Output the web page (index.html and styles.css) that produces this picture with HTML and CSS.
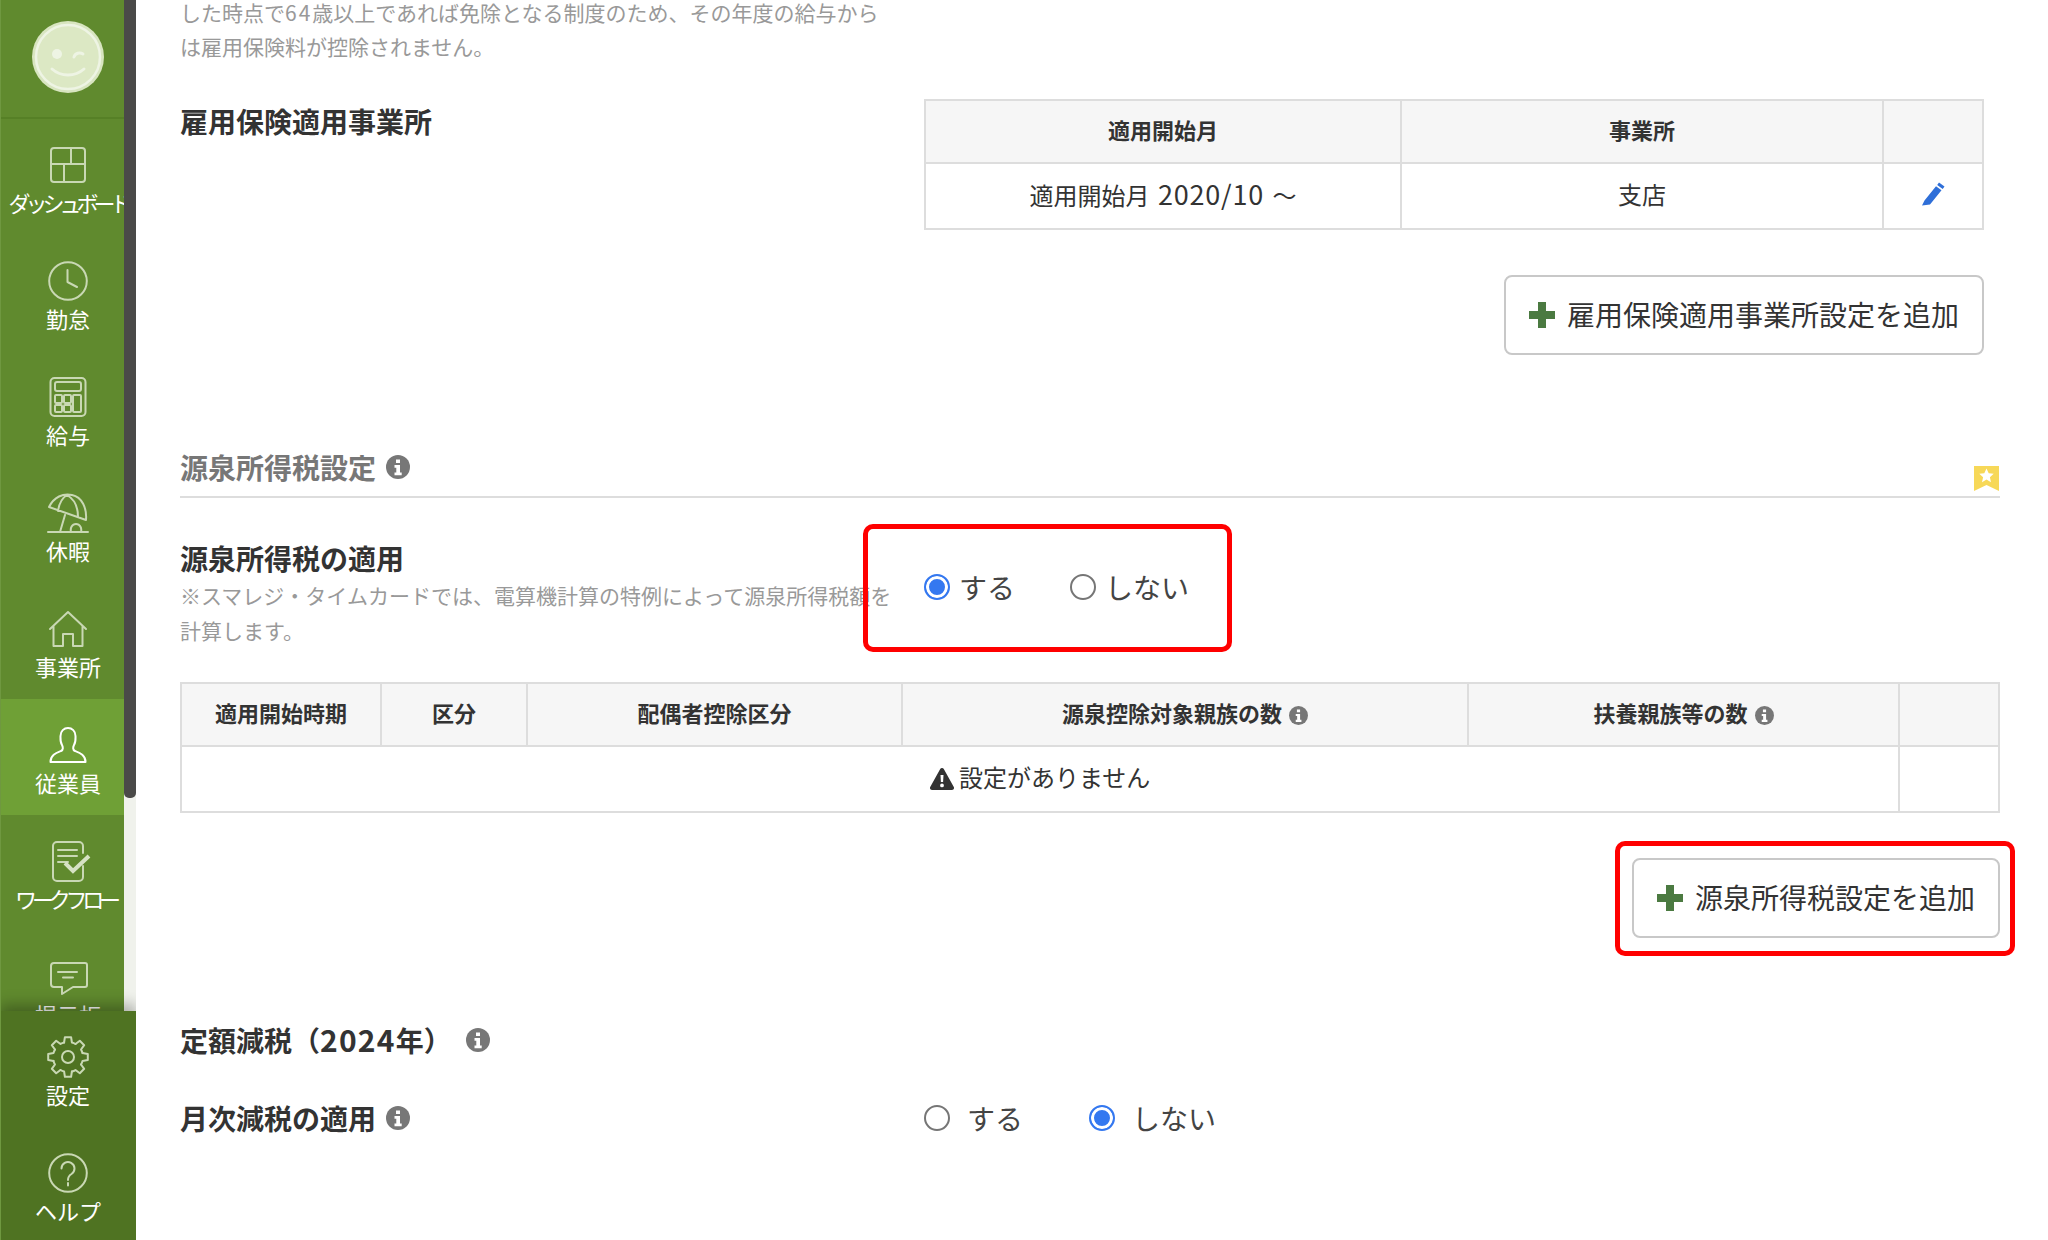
FILE: index.html
```html
<!DOCTYPE html>
<html lang="ja">
<head>
<meta charset="utf-8">
<title>従業員設定</title>
<link rel="stylesheet" href="styles.css">
</head>
<body>
<svg class="defs" width="0" height="0">
  <defs>
    <path id="gear-tooth" d="M-3.9-14.5L-3.1-19.8H3.1L3.9-14.5A15 15 0 0 1 7.5-13"/>
    <g id="info">
      <circle cx="12" cy="12" r="12"/>
      <path class="info-i" d="M10 4.500h4v3.500h-4zM8.500 10h5.500v7.500h1.700v2.700H8.500v-2.700h1.800v-4.800H8.500z"/>
    </g>
  </defs>
</svg>
<aside class="sidebar">
  <div class="avatar-wrap">
    <svg class="avatar" viewBox="0 0 72 72">
      <circle class="av-bg" cx="36" cy="36" r="36"/>
      <circle class="av-ring" cx="36" cy="36" r="32"/>
      <circle class="av-fill" cx="25" cy="33" r="5"/>
      <path class="av-line" d="M42 36c1-4 6-5 9-3M20 48c9 8 23 8 32 0"/>
    </svg>
  </div>
  <nav class="nav-list">
    <a class="nav-item">
      <svg class="nav-icon" viewBox="0 0 40 40"><rect x="3" y="3" width="34" height="34" rx="3"/><path d="M23 3v16M3 19h34M16 19v18"/></svg>
      <span class="nav-label nav-label-tight">ダッシュボード</span>
    </a>
    <a class="nav-item">
      <svg class="nav-icon" viewBox="0 0 40 40"><circle cx="20" cy="20" r="18.800"/><path d="M19.500 9v12l9.500 5"/></svg>
      <span class="nav-label">勤怠</span>
    </a>
    <a class="nav-item">
      <svg class="nav-icon" viewBox="0 0 40 40"><rect x="2.500" y="1" width="35" height="38" rx="4"/><rect x="7" y="5" width="26" height="9" rx="2"/><rect x="7" y="18" width="7" height="8" rx="1"/><rect x="16" y="18" width="7" height="8" rx="1"/><rect x="7" y="28" width="7" height="7" rx="1"/><rect x="16" y="28" width="7" height="7" rx="1"/><rect x="25" y="18" width="8" height="17" rx="1"/></svg>
      <span class="nav-label">給与</span>
    </a>
    <a class="nav-item">
      <svg class="nav-icon" viewBox="0 0 40 40"><path d="M1 14C6 4 15 0 24 2c10 2 15 13 14 25zM19 2c-5 3-8 9-9 16M19 2c7 4 11 12 11 22M17 22l-5 17M0 39h40M23 39c-1-4 1-8 5-8s6 4 5 8"/></svg>
      <span class="nav-label">休暇</span>
    </a>
    <a class="nav-item">
      <svg class="nav-icon" viewBox="0 0 40 40"><path d="M2 20L20 3l18 17M5.500 17v20H15V25h10v12h9.500V17"/></svg>
      <span class="nav-label">事業所</span>
    </a>
    <a class="nav-item nav-item-active">
      <svg class="nav-icon" viewBox="0 0 40 40"><path d="M2.500 37c0-7 5.500-9 10.500-11 2.500-1 2-4 1-6-2-3-1.500-7-1.500-9 0-5 3.500-8 7.500-8s7.500 3 7.500 8c0 2 .5 6-1.500 9-1 2-1.500 5 1 6 5 2 10.500 4 10.500 11z"/></svg>
      <span class="nav-label">従業員</span>
    </a>
    <a class="nav-item">
      <svg class="nav-icon" viewBox="0 0 40 40"><path d="M35 25v11a4 4 0 0 1-4 4H9a4 4 0 0 1-4-4V5a4 4 0 0 1 4-4h22a4 4 0 0 1 4 4v7M10 9h19M10 15h19M10 21h10"/><path class="nav-check" d="M17 22l8 8 16-15"/></svg>
      <span class="nav-label nav-label-flow">ワークフロー</span>
    </a>
    <a class="nav-item">
      <svg class="nav-icon" viewBox="0 0 40 40"><path d="M6 6h31a2 2 0 0 1 2 2v20a2 2 0 0 1-2 2H25l-11 7v-7H6a3 3 0 0 1-3-3V9a3 3 0 0 1 3-3zM10 15h19M15 20.500h10"/></svg>
      <span class="nav-label">掲示板</span>
    </a>
  </nav>
  <div class="scrollbar"><div class="scrollbar-thumb"></div></div>
  <div class="nav-bottom">
    <a class="nav-item">
      <svg class="nav-icon" viewBox="0 0 40 40">
        <g transform="translate(20 20)">
          <use href="#gear-tooth"/>
          <use href="#gear-tooth" transform="rotate(45)"/>
          <use href="#gear-tooth" transform="rotate(90)"/>
          <use href="#gear-tooth" transform="rotate(135)"/>
          <use href="#gear-tooth" transform="rotate(180)"/>
          <use href="#gear-tooth" transform="rotate(225)"/>
          <use href="#gear-tooth" transform="rotate(270)"/>
          <use href="#gear-tooth" transform="rotate(315)"/>
        </g>
        <circle cx="20" cy="20" r="6"/>
      </svg>
      <span class="nav-label">設定</span>
    </a>
    <a class="nav-item">
      <svg class="nav-icon" viewBox="0 0 40 40"><circle cx="20" cy="20" r="18.800"/><path d="M13.500 15.500a6.500 6.500 0 1 1 10 5.500c-2.500 1.500-3.500 3-3.500 6M20 30v2.500"/></svg>
      <span class="nav-label">ヘルプ</span>
    </a>
  </div>
</aside>

<main class="main">
  <p class="note note-top">した時点で<span class="note-num">64</span>歳以上であれば免除となる制度のため、その年度の給与から<br>は雇用保険料が控除されません。</p>

  <section class="office-row">
    <h3 class="row-title office-title">雇用保険適用事業所</h3>
    <table class="grid office-table">
      <colgroup><col class="c-o1"><col class="c-o2"><col class="c-o3"></colgroup>
      <thead><tr><th>適用開始月</th><th>事業所</th><th></th></tr></thead>
      <tbody><tr>
        <td>適用開始月 <span class="cell-num">2020/10</span> 〜</td>
        <td>支店</td>
        <td><svg class="pencil" viewBox="0 0 25 25"><path d="M18 1.500l5.500 4-1.800 2.500-5.500-4zM15 5.200l5.500 4L9 23.500 1 24.500l2.500-5z"/></svg></td>
      </tr></tbody>
    </table>
  </section>
  <div class="actions actions-office">
    <button class="add-btn add-btn-office" type="button">
      <svg class="plus" viewBox="0 0 26 26"><path d="M9 0h8v9h9v8h-9v9H9v-9H0V9h9z"/></svg>
      <span class="btn-text">雇用保険適用事業所設定を追加</span>
    </button>
  </div>

  <header class="section-head">
    <h2 class="section-title">源泉所得税設定</h2>
    <svg class="info-icon info-lg" viewBox="0 0 24 24"><use href="#info"/></svg>
    <svg class="bookmark" viewBox="0 0 25 25"><path class="bm-bg" d="M0 0h25v25l-12.500-6L0 25z"/><path class="bm-star" d="M12.500 2.500l2.200 4.800 5 .5-3.800 3.400 1.100 5.100-4.500-2.700L8 16.300l1.100-5.100-3.800-3.400 5-.5z"/></svg>
  </header>

  <section class="apply-row">
    <div class="apply-text">
      <h3 class="row-title">源泉所得税の適用</h3>
      <p class="note">※スマレジ・タイムカードでは、電算機計算の特例によって源泉所得税額を<br>計算します。</p>
    </div>
    <div class="radios radios-tight">
      <label class="radio"><span class="dot dot-on"></span><span>する</span></label>
      <label class="radio"><span class="dot"></span><span>しない</span></label>
    </div>
    <div class="callout callout-radios"></div>
  </section>

  <table class="grid tax-table">
    <colgroup><col class="c-t1"><col class="c-t2"><col class="c-t3"><col class="c-t4"><col class="c-t5"><col class="c-t6"></colgroup>
    <thead><tr>
      <th>適用開始時期</th><th>区分</th><th>配偶者控除区分</th>
      <th>源泉控除対象親族の数 <svg class="info-icon info-sm" viewBox="0 0 24 24"><use href="#info"/></svg></th>
      <th>扶養親族等の数 <svg class="info-icon info-sm" viewBox="0 0 24 24"><use href="#info"/></svg></th>
      <th></th>
    </tr></thead>
    <tbody><tr>
      <td colspan="5" class="empty-cell"><svg class="warn" viewBox="0 0 24 22"><path fill-rule="evenodd" d="M12 0c.8 0 1.400.4 1.800 1l10 18c.7 1.300-.2 3-1.800 3H2c-1.600 0-2.500-1.700-1.800-3l10-18c.4-.6 1-1 1.800-1zM10.500 7l.4 7h2.200l.4-7zM12 15.500a1.900 1.900 0 1 0 0 3.800 1.900 1.900 0 0 0 0-3.800z"/></svg> 設定がありません</td>
      <td></td>
    </tr></tbody>
  </table>

  <div class="actions actions-tax">
    <button class="add-btn add-btn-tax" type="button">
      <svg class="plus" viewBox="0 0 26 26"><path d="M9 0h8v9h9v8h-9v9H9v-9H0V9h9z"/></svg>
      <span class="btn-text">源泉所得税設定を追加</span>
    </button>
    <div class="callout callout-btn"></div>
  </div>

  <div class="flat-head">
    <h3 class="row-title">定額減税（<span class="title-num">2024</span>年）</h3>
    <svg class="info-icon info-lg" viewBox="0 0 24 24"><use href="#info"/></svg>
  </div>

  <section class="monthly-row">
    <div class="monthly-label">
      <h3 class="row-title">月次減税の適用</h3>
      <svg class="info-icon info-lg" viewBox="0 0 24 24"><use href="#info"/></svg>
    </div>
    <div class="radios radios-wide">
      <label class="radio"><span class="dot"></span><span>する</span></label>
      <label class="radio"><span class="dot dot-on"></span><span>しない</span></label>
    </div>
  </section>
</main>
</body>
</html>
```
FILE: styles.css
```css
* { box-sizing: border-box; }
html, body { margin: 0; padding: 0; height: 1240px; overflow: hidden; background: #fff; }
body {
  display: flex;
  font-family: "Noto Sans CJK JP", "Liberation Sans", sans-serif;
  color: #333;
}
.defs { position: absolute; }
.info-i { fill: #fff; }

/* sidebar */
.sidebar {
  position: relative;
  flex: 0 0 136px;
  width: 136px;
  height: 1240px;
  overflow: hidden;
  background: #608a2e;
  border-left: 1px solid #6f9840;
}
.avatar-wrap {
  height: 119px;
  margin-left: -1px;
  padding-top: 21px;
  display: flex;
  justify-content: center;
  border-bottom: 2px solid #568026;
}
.avatar { width: 72px; height: 72px; }
.av-bg { fill: #d8e5c0; }
.av-ring { fill: #dce8c4; stroke: #eef4e4; stroke-width: 2.500; }
.av-fill { fill: #eef4e4; }
.av-line { fill: none; stroke: #eef4e4; stroke-width: 3; stroke-linecap: round; }
.nav-list, .nav-bottom { margin-left: -1px; }
.nav-item {
  display: flex;
  flex-direction: column;
  align-items: center;
  height: 116px;
  width: 136px;
  padding-top: 26px;
  color: #fff;
}
.nav-item-active { background: #6fa036; }
.nav-icon {
  width: 40px;
  height: 40px;
  flex: none;
  overflow: visible;
  fill: none;
  stroke: #c9d8b4;
  stroke-width: 2;
  stroke-linejoin: round;
  stroke-linecap: round;
}
.nav-item-active .nav-icon { stroke: #fff; }
.nav-check { stroke: #d6e2c4; stroke-width: 4; stroke-linecap: butt; stroke-linejoin: miter; }
.nav-label {
  margin-top: 4px;
  font-size: 22px;
  line-height: 26px;
  white-space: nowrap;
}
.nav-label-tight { letter-spacing: -5px; }
.nav-label-flow { letter-spacing: -5.200px; margin-right: 5px; }
.scrollbar {
  position: absolute;
  left: 123px;
  top: 0;
  width: 12px;
  height: 1011px;
  background: #f0f2ec;
}
.scrollbar-thumb {
  height: 798px;
  background: #4a4a48;
  border-radius: 0 0 5px 5px;
}
.nav-bottom {
  position: absolute;
  left: 0;
  top: 1011px;
  width: 136px;
  height: 229px;
  background: #4f7322;
  box-shadow: 0 -6px 14px rgba(0, 0, 0, .3);
}

/* main */
.main {
  flex: 1;
  min-width: 0;
  padding: 0 48px 0 44px;
}
.note {
  margin: 0;
  font-size: 21px;
  line-height: 35px;
  color: #999;
  white-space: nowrap;
}
.note-top { margin-top: -5px; line-height: 34px; }
.note-num { letter-spacing: 2px; }
.row-title {
  margin: 0;
  font-size: 28px;
  line-height: 40px;
  font-weight: 700;
  color: #333;
  white-space: nowrap;
}
.title-num { font-size: 30px; letter-spacing: 1.200px; }
.office-row {
  display: flex;
  justify-content: space-between;
  margin-top: 36px;
  padding-right: 16px;
}
.office-title { padding-top: 2px; }
.grid {
  border-collapse: collapse;
  table-layout: fixed;
  background: #fff;
}
.grid th, .grid td {
  border: 2px solid #ddd;
  padding: 0 0 6px;
  text-align: center;
  vertical-align: middle;
}
.grid th {
  background: #f6f6f6;
  font-size: 22px;
  font-weight: 700;
  height: 63px;
}
.grid td { font-size: 24px; word-spacing: 3px; height: 66px; }
.cell-num { font-size: 27px; letter-spacing: .8px; }
.office-table { width: 1058px; }
.c-o1 { width: 476px; }
.c-o2 { width: 482px; }
.c-o3 { width: 100px; }
.pencil { display: block; width: 25px; height: 25px; margin: 0 auto; fill: #2f6fd8; }
.actions { display: flex; justify-content: flex-end; position: relative; }
.actions-office { margin-top: 45px; padding-right: 16px; }
.actions-tax { margin-top: 45px; }
.add-btn {
  display: flex;
  align-items: center;
  justify-content: center;
  gap: 12px;
  height: 80px;
  padding: 0;
  background: #fff;
  border: 2px solid #c8c8c8;
  border-radius: 8px;
  font: inherit;
  font-size: 28px;
  color: #333;
}
.btn-text { margin-top: -2px; }
.add-btn-office { width: 480px; }
.add-btn-tax { width: 368px; }
.plus { width: 26px; height: 26px; fill: #4b7a41; flex: none; }
.section-head {
  position: relative;
  display: flex;
  align-items: center;
  gap: 10px;
  margin-top: 92px;
  height: 51px;
  padding-bottom: 9px;
  border-bottom: 2px solid #ddd;
}
.section-title {
  margin: 0;
  font-size: 28px;
  line-height: 38px;
  font-weight: 700;
  color: #777;
}
.info-icon { fill: #777; flex: none; }
.info-lg { width: 24px; height: 24px; }
.info-sm { width: 19px; height: 19px; vertical-align: -3px; margin-left: 2px; }
.bookmark {
  position: absolute;
  right: 1px;
  top: 19px;
  width: 25px;
  height: 25px;
}
.bm-bg { fill: #f7d858; }
.bm-star { fill: #fff; }
.apply-row {
  position: relative;
  display: flex;
  margin-top: 40px;
  height: 112px;
}
.apply-text { flex: 0 0 744px; width: 744px; }
.radios {
  display: flex;
  align-items: center;
  height: 25px;
  font-size: 28px;
  color: #444;
}
.radios-tight { margin-top: 36px; }
.radios-tight .radio { gap: 9px; }
.radios-tight .radio + .radio { margin-left: 55px; }
.radio { display: flex; align-items: center; }
.dot {
  display: block;
  flex: none;
  width: 26px;
  height: 26px;
  border: 2px solid #767676;
  border-radius: 50%;
  background: #fff;
}
.dot-on {
  border-color: #3478f0;
  background: #3478f0;
  box-shadow: inset 0 0 0 3px #fff;
}
.callout {
  position: absolute;
  border: 5px solid #ff0000;
  border-radius: 10px;
  pointer-events: none;
}
.callout-radios { left: 683px; top: -14px; width: 369px; height: 128px; }
.callout-btn { right: -15px; top: -17px; width: 400px; height: 115px; }
.tax-table { width: 1818px; margin-top: 32px; }
.c-t1 { width: 200px; }
.c-t2 { width: 146px; }
.c-t3 { width: 375px; }
.c-t4 { width: 566px; }
.c-t5 { width: 431px; }
.c-t6 { width: 100px; }
.grid .empty-cell { font-size: 24px; word-spacing: 0; }
.warn { width: 24px; height: 22px; fill: #333; vertical-align: -3px; }
.flat-head {
  display: flex;
  align-items: center;
  gap: 14px;
  margin-top: 81px;
}
.monthly-row {
  display: flex;
  align-items: center;
  margin-top: 38px;
  height: 40px;
}
.monthly-label {
  flex: 0 0 744px;
  display: flex;
  align-items: center;
  gap: 10px;
}
.radios-wide .radio { gap: 17px; }
.radios-wide .radio + .radio { margin-left: 66px; }
```
